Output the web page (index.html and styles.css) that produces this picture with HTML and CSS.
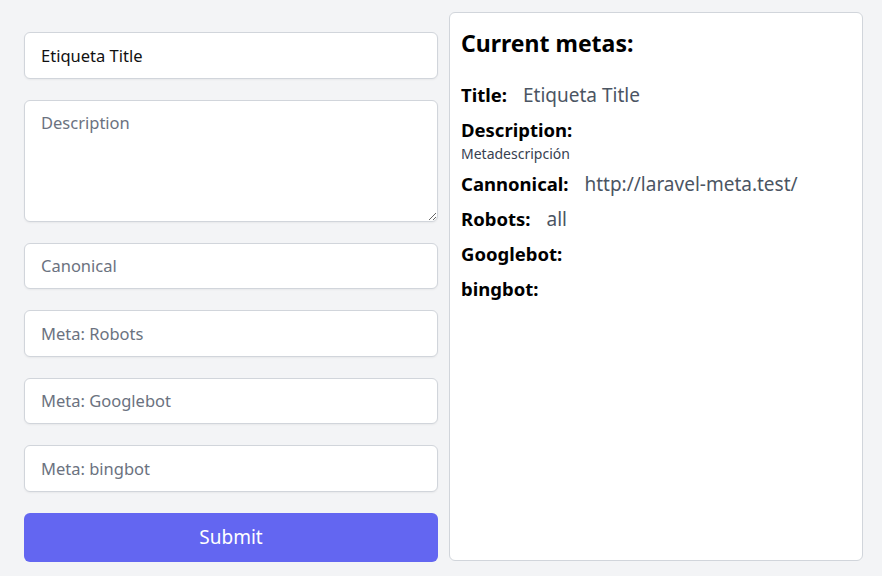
FILE: index.html
```html
<!DOCTYPE html>
<html lang="es">
<head>
  <meta charset="UTF-8">
  <meta name="viewport" content="width=device-width, initial-scale=1.0">
  <title>Laravel Meta</title>
  <link rel="stylesheet" href="styles.css">
</head>
<body>
  <div class="page">
    <form class="meta-form" action="#" method="post">
      <input class="field" type="text" name="title" value="Etiqueta Title" placeholder="Title">
      <textarea class="field field-area" name="description" placeholder="Description"></textarea>
      <input class="field" type="text" name="canonical" placeholder="Canonical">
      <input class="field" type="text" name="robots" placeholder="Meta: Robots">
      <input class="field" type="text" name="googlebot" placeholder="Meta: Googlebot">
      <input class="field" type="text" name="bingbot" placeholder="Meta: bingbot">
      <button class="submit" type="submit">Submit</button>
    </form>

    <div class="metas">
      <h2>Current metas:</h2>
      <div class="meta-row"><b>Title:</b><span>Etiqueta Title</span></div>
      <div class="meta-row stacked"><b>Description:</b><small>Metadescripción</small></div>
      <div class="meta-row"><b>Cannonical:</b><span>http://laravel-meta.test/</span></div>
      <div class="meta-row"><b>Robots:</b><span>all</span></div>
      <div class="meta-row"><b>Googlebot:</b><span></span></div>
      <div class="meta-row"><b>bingbot:</b><span></span></div>
    </div>
  </div>
</body>
</html>
```

FILE: styles.css
```css
*, *::before, *::after {
  box-sizing: border-box;
  margin: 0;
  padding: 0;
}

body {
  background: #f3f4f6;
  font-family: "Noto Sans", "Open Sans", sans-serif;
  color: #000;
}

.page {
  display: flex;
  align-items: flex-start;
  padding: 12px 19px 0 4px;
}

.meta-form {
  width: 434px;
  padding: 20px 0 0 20px;
  display: flex;
  flex-direction: column;
  gap: 21px;
}

.field {
  display: block;
  width: 100%;
  height: 46.5px;
  padding: 10px 16px;
  font-family: inherit;
  font-size: 16.5px;
  line-height: 24px;
  color: #111;
  background: #fff;
  border: 1px solid #d1d5db;
  border-radius: 6px;
  box-shadow: 0 1px 2px rgba(0, 0, 0, 0.05);
  outline: none;
}

.field::placeholder {
  color: #6b7280;
}

.field-area {
  height: 122px;
  resize: vertical;
}

.submit {
  height: 49px;
  border: 0;
  border-radius: 6px;
  background: #6366f1;
  color: #fff;
  font-family: inherit;
  font-size: 19px;
  cursor: pointer;
}

.metas {
  width: 414px;
  height: 549px;
  margin-left: 11px;
  padding: 14px 11px;
  background: #fff;
  border: 1px solid #d1d5db;
  border-radius: 6px;
}

.metas h2 {
  font-size: 23px;
  line-height: 32px;
  font-weight: 700;
  margin-bottom: 22px;
}

.meta-row {
  display: flex;
  align-items: baseline;
  gap: 16px;
  font-size: 18.5px;
  line-height: 28px;
  margin-bottom: 7px;
}

.meta-row b {
  font-weight: 700;
}

.meta-row span {
  font-size: 19px;
  color: #4b5563;
}

.meta-row.stacked {
  flex-direction: column;
  align-items: flex-start;
  gap: 0;
}

.meta-row small {
  font-size: 14px;
  line-height: 19px;
  color: #374151;
}
```
